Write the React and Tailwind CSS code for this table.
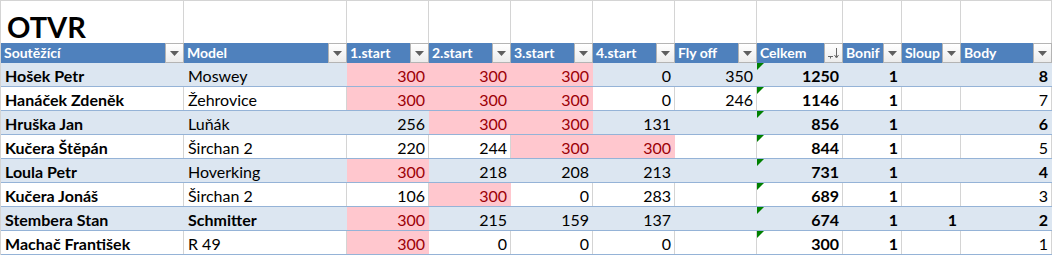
import React from "react";

const COLS = [
  { label: "Soutěžící" },
  { label: "Model" },
  { label: "1.start" },
  { label: "2.start" },
  { label: "3.start" },
  { label: "4.start" },
  { label: "Fly off" },
  { label: "Celkem", sort: true },
  { label: "Bonif" },
  { label: "Sloup" },
  { label: "Body" },
];

// p = pink (max), b = bold
const ROWS = [
  ["Hošek Petr", "Moswey", "300p", "300p", "300p", "0", "350", "1250", "1", "", "8b"],
  ["Hanáček Zdeněk", "Žehrovice", "300p", "300p", "300p", "0", "246", "1146", "1", "", "7"],
  ["Hruška Jan", "Luňák", "256", "300p", "300p", "131", "", "856", "1", "", "6b"],
  ["Kučera Štěpán", "Širchan 2", "220", "244", "300p", "300p", "", "844", "1", "", "5"],
  ["Loula Petr", "Hoverking", "300p", "218", "208", "213", "", "731", "1", "", "4b"],
  ["Kučera Jonáš", "Širchan 2", "106", "300p", "0", "283", "", "689", "1", "", "3"],
  ["Stembera Stan", "Schmitterb", "300p", "215", "159", "137", "", "674", "1", "1b", "2b"],
  ["Machač František", "R 49", "300p", "0", "0", "0", "", "300", "1", "", "1"],
];

const grid =
  "grid grid-cols-[183px_163px_82px_82px_82px_82px_82px_86px_59px_59px_91px]";

function FilterButton({ sort }) {
  return (
    <div className="ml-auto flex h-full w-[19px] shrink-0 items-center justify-center border border-[#b4b4b4] bg-gradient-to-b from-white to-[#ececec]">
      {sort ? (
        <svg width="15" height="14" viewBox="0 0 15 14">
          <path d="M2 10.5h5M4.5 10.5v2" stroke="#666" strokeWidth="1" fill="none" />
          <path d="M10.5 2v9" stroke="#666" strokeWidth="1" fill="none" />
          <path d="M8.5 9l2 3 2-3" stroke="#666" strokeWidth="1" fill="none" />
        </svg>
      ) : (
        <svg width="9" height="5" viewBox="0 0 9 5">
          <path d="M0 0h9L4.5 5z" fill="#5f5f5f" />
        </svg>
      )}
    </div>
  );
}

function Cell({ raw, col, banded }) {
  const pink = raw.endsWith("p");
  const boldMark = raw.endsWith("b");
  const text = pink || boldMark ? raw.slice(0, -1) : raw;
  const isText = col < 2;
  const bold = col === 0 || col === 7 || col === 8 || boldMark;
  const bg = pink ? "bg-[#ffc7ce]" : banded ? "bg-[#dce6f1]" : "bg-white";
  const line = pink || banded ? "border-r-transparent" : "border-r-[#d4d4d4]";
  return (
    <div
      className={`relative flex h-[23px] items-end whitespace-nowrap border-r pb-[2px] ${bg} ${line} ${
        isText ? "justify-start pl-[4px]" : "justify-end pr-[3px]"
      } ${pink ? "text-[#9c0006]" : "text-black"} ${bold ? "font-bold" : ""}`}
    >
      {col === 7 && (
        <svg className="absolute left-0 top-0" width="7" height="7" viewBox="0 0 7 7">
          <path d="M0 0h7L0 7z" fill="#008000" />
        </svg>
      )}
      {text}
    </div>
  );
}

export default function App() {
  return (
    <div
      className="h-[256px] w-[1052px] overflow-hidden bg-white text-[16px] leading-none"
      style={{ fontFamily: "Lato, 'Open Sans', sans-serif" }}
    >
      <div className="border-l border-t border-[#d4d4d4]">
        {/* title row */}
        <div className={grid}>
          {COLS.map((c, i) => (
            <div
              key={i}
              className="flex h-[42px] items-end border-r border-[#d4d4d4] pb-[2px] pl-[6px]"
            >
              {i === 0 && <span className="text-[29px] font-bold text-black">OTVR</span>}
            </div>
          ))}
        </div>

        {/* header row */}
        <div className={`${grid} h-[20px] bg-[#4f81bd]`}>
          {COLS.map((c, i) => (
            <div key={i} className="flex h-[20px] items-center">
              <span className="whitespace-nowrap pl-[3px] text-[14px] font-bold leading-[18px] text-white">
                {c.label}
              </span>
              <FilterButton sort={c.sort} />
            </div>
          ))}
        </div>

        {/* data rows */}
        {ROWS.map((row, r) => (
          <div key={r} className={`${grid} border-b border-[#95b3d7]`}>
            {row.map((raw, c) => (
              <Cell key={c} raw={raw} col={c} banded={r % 2 === 0} />
            ))}
          </div>
        ))}
      </div>
    </div>
  );
}
